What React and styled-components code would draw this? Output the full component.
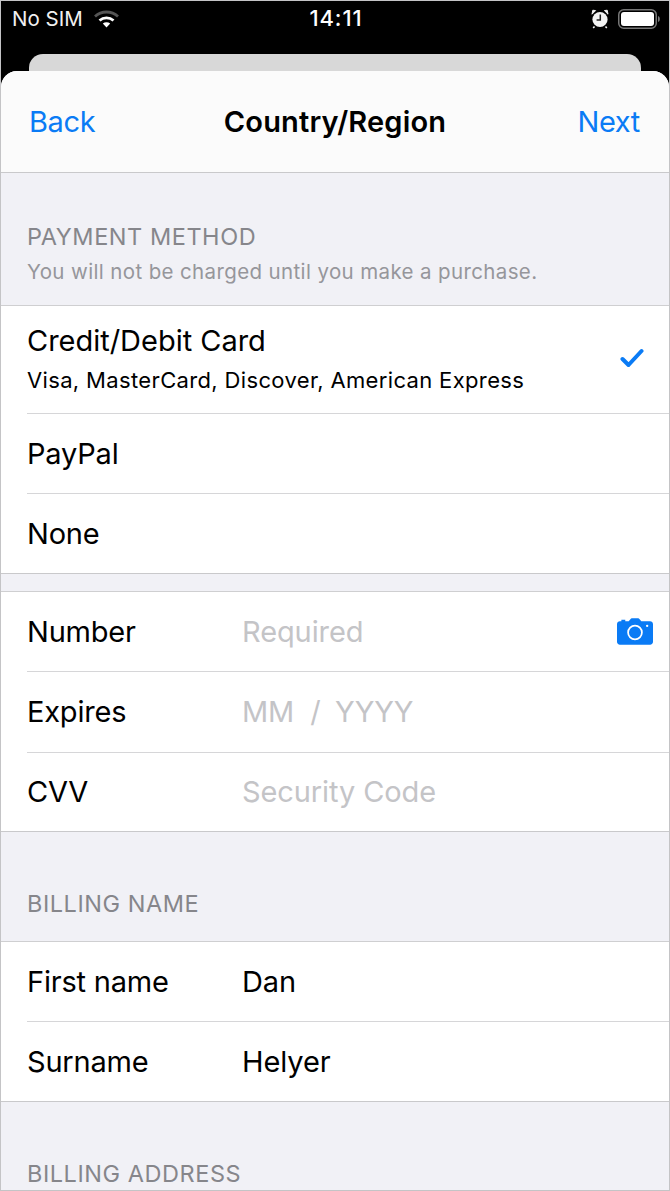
import React from 'react'
import styled, { createGlobalStyle } from 'styled-components'

const GlobalStyle = createGlobalStyle`
    html, body {
        margin: 0;
        padding: 0;
        background: #f1f1f6;
    }
    * {
        box-sizing: border-box;
    }
`

const Page = styled.div`
    width: 670px;
    height: 1191px;
    overflow: hidden;
    display: flex;
    flex-direction: column;
    background: #000;
    border: 1px solid #c4c4c6;
    font-family: Inter, "Liberation Sans", sans-serif;
    color: #000;
`

const StatusBar = styled.div`
    flex: none;
    height: 53px;
    padding: 5px 9px 0 11px;
    display: grid;
    grid-template-columns: 1fr auto 1fr;
    align-items: start;
    color: #fff;
`

const StatusLeft = styled.div`
    display: flex;
    align-items: center;
    gap: 11px;
    font-size: 20.5px;
    line-height: 26px;
    color: #f0f0f0;
`

const Clock = styled.div`
    font-size: 22px;
    line-height: 25px;
    font-weight: 500;
    letter-spacing: 0.9px;
`

const StatusRight = styled.div`
    display: flex;
    justify-content: flex-end;
    align-items: center;
    gap: 9px;
    height: 26px;
`

const BackCard = styled.div`
    flex: none;
    height: 17px;
    margin: 0 28px;
    background: #d8d8d8;
    border-radius: 14px 14px 0 0;
`

const Sheet = styled.div`
    flex: 1;
    background: #f1f1f6;
    border-radius: 16px 16px 0 0;
    overflow: hidden;
`

const Nav = styled.div`
    height: 102px;
    padding: 0 29px 0 28px;
    display: flex;
    align-items: center;
    justify-content: space-between;
    position: relative;
    background: #fbfbfb;
    border-bottom: 1px solid #c9c9cb;
`

const NavLink = styled.span`
    font-size: 29px;
    letter-spacing: -0.35px;
    color: #0a7bf5;
`

const NavTitle = styled.span`
    position: absolute;
    left: 0;
    right: 0;
    text-align: center;
    font-size: 29px;
    font-weight: 600;
    letter-spacing: 0.17px;
`

const SectionHead = styled.div`
    height: ${({ $height }) => $height}px;
    padding: 0 26px ${({ $bottom }) => $bottom}px;
    display: flex;
    flex-direction: column;
    justify-content: flex-end;
`

const SectionTitle = styled.div`
    font-size: 23.5px;
    line-height: 30px;
    letter-spacing: 0.55px;
    color: #86868b;
`

const SectionNote = styled.div`
    font-size: 20.5px;
    line-height: 30px;
    letter-spacing: 0.37px;
    color: #96969b;
    margin-top: 5px;
`

const Group = styled.div`
    background: #fff;
    border-top: 1px solid #cfcfd1;
    border-bottom: 1px solid #c9c9cb;
`

const Row = styled.div`
    height: ${({ $height }) => $height}px;
    margin-left: 26px;
    padding-right: 16px;
    display: flex;
    align-items: center;
    & + & {
        border-top: 1px solid #d6d6d8;
    }
`

const Label = styled.div`
    font-size: 29px;
    line-height: 36px;
    letter-spacing: -0.2px;
    ${({ $fixed }) => $fixed && 'width: 215px; flex: none;'}
`

const RowStack = styled.div`
    flex: 1;
    display: flex;
    flex-direction: column;
    gap: 7px;
    margin-bottom: 2px;

    ${Label} {
        letter-spacing: -0.02px;
    }
`

const SubLabel = styled.div`
    font-size: 22px;
    line-height: 28px;
    letter-spacing: 0.35px;
`

const Value = styled.div`
    flex: 1;
    font-size: 29px;
    line-height: 36px;
    letter-spacing: -0.1px;
    white-space: pre;
    color: ${({ $placeholder }) => ($placeholder ? '#c4c4c7' : '#000')};
`

const Gap = styled.div`
    height: 17px;
`

const CheckMark = styled.svg`
    margin: 0 9px 3px 0;
`

function WifiIcon() {
    return (
        <svg width="25" height="18" viewBox="0 0 25 18">
            <path d="M1 6.500C7.500 .5 17.500 .5 24 6.500" fill="none" stroke="#555" strokeWidth="2.8" />
            <path d="M5.500 10.500C9.500 7 15.500 7 19.500 10.500" fill="none" stroke="#fff" strokeWidth="2.8" />
            <path d="M12.500 17.500L8.800 13.600C11 11.900 14 11.900 16.200 13.600Z" fill="#fff" />
        </svg>
    )
}

function AlarmIcon() {
    return (
        <svg width="18" height="20" viewBox="0 0 18 20">
            <circle cx="9" cy="10.500" r="7.600" fill="#f2f2f2" />
            <path d="M1 5.200L4.600 1.600 1.800 1.200ZM17 5.200L13.400 1.600 16.200 1.200Z" fill="#f2f2f2" stroke="#f2f2f2" />
            <path d="M3.500 17.500L2.200 19M14.500 17.500L15.800 19" stroke="#f2f2f2" strokeWidth="1.6" />
            <path d="M9.300 5.500V11H5.600" fill="none" stroke="#222" strokeWidth="1.5" />
        </svg>
    )
}

function BatteryIcon() {
    return (
        <svg width="42" height="20" viewBox="0 0 42 20">
            <rect x=".75" y=".75" width="37.500" height="18.500" rx="5" fill="none" stroke="#777" strokeWidth="1.5" />
            <rect x="3" y="3" width="33" height="14" rx="3" fill="#fff" />
            <path d="M40 7c1.300 .4 1.800 1.500 1.800 3s-.5 2.600-1.800 3z" fill="#777" />
        </svg>
    )
}

function CheckIcon() {
    return (
        <CheckMark width="24" height="20" viewBox="0 0 24 20">
            <path d="M2.500 11L8.500 17 21.500 3" fill="none" stroke="#0a7bf5" strokeWidth="4" strokeLinecap="round" strokeLinejoin="round" />
        </CheckMark>
    )
}

function CameraIcon() {
    return (
        <svg width="36" height="27" viewBox="0 0 37 27">
            <path
                fillRule="evenodd"
                fill="#0a7bf5"
                d="M3 3h1.500V1.500h4V3h3.500l2-2.400c.3-.4.700-.6 1.200-.6h6.600c.5 0 .9.200 1.200.6L25 3h9c1.700 0 3 1.300 3 3v18c0 1.700-1.300 3-3 3H3c-1.700 0-3-1.300-3-3V6c0-1.700 1.300-3 3-3zM18.500 6.500a8 8 0 1 0 0 16 8 8 0 0 0 0-16zM18.500 8.300a6.200 6.200 0 1 1 0 12.400 6.200 6.200 0 0 1 0-12.400zM31 6.500a1.200 1.200 0 1 0 0 2.400 1.200 1.200 0 0 0 0-2.400z"
            />
        </svg>
    )
}

export default function App() {
    return (
        <Page>
            <GlobalStyle />
            <StatusBar>
                <StatusLeft>
                    <span>No SIM</span>
                    <WifiIcon />
                </StatusLeft>
                <Clock>14:11</Clock>
                <StatusRight>
                    <AlarmIcon />
                    <BatteryIcon />
                </StatusRight>
            </StatusBar>
            <BackCard />
            <Sheet>
                <Nav>
                    <NavLink>Back</NavLink>
                    <NavTitle>Country/Region</NavTitle>
                    <NavLink>Next</NavLink>
                </Nav>
                <SectionHead $height={132} $bottom={18}>
                    <SectionTitle>PAYMENT METHOD</SectionTitle>
                    <SectionNote>You will not be charged until you make a purchase.</SectionNote>
                </SectionHead>
                <Group>
                    <Row $height={107}>
                        <RowStack>
                            <Label>Credit/Debit Card</Label>
                            <SubLabel>Visa, MasterCard, Discover, American Express</SubLabel>
                        </RowStack>
                        <CheckIcon />
                    </Row>
                    <Row $height={80}>
                        <Label>PayPal</Label>
                    </Row>
                    <Row $height={80}>
                        <Label>None</Label>
                    </Row>
                </Group>
                <Gap />
                <Group>
                    <Row $height={79}>
                        <Label $fixed>Number</Label>
                        <Value $placeholder>Required</Value>
                        <CameraIcon />
                    </Row>
                    <Row $height={81}>
                        <Label $fixed>Expires</Label>
                        <Value $placeholder>{'MM  /\u2002YYYY'}</Value>
                    </Row>
                    <Row $height={79}>
                        <Label $fixed>CVV</Label>
                        <Value $placeholder>Security Code</Value>
                    </Row>
                </Group>
                <SectionHead $height={109} $bottom={22}>
                    <SectionTitle>BILLING NAME</SectionTitle>
                </SectionHead>
                <Group>
                    <Row $height={79}>
                        <Label $fixed>First name</Label>
                        <Value>Dan</Value>
                    </Row>
                    <Row $height={80}>
                        <Label $fixed>Surname</Label>
                        <Value>Helyer</Value>
                    </Row>
                </Group>
                <SectionHead $height={87} $bottom={0}>
                    <SectionTitle>BILLING ADDRESS</SectionTitle>
                </SectionHead>
            </Sheet>
        </Page>
    )
}
